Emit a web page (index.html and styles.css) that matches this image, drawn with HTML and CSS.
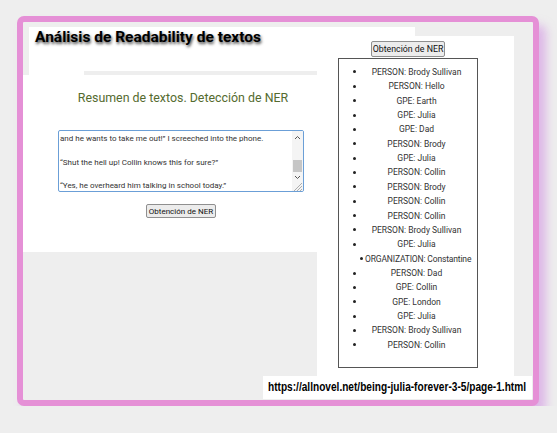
FILE: index.html
```html
<!DOCTYPE html>
<html lang="es">
<head>
<meta charset="utf-8">
<title>Análisis de Readability de textos</title>
<link rel="stylesheet" href="styles.css">
</head>
<body>
<div class="frame">
  <div class="canvas">
    <div class="title-band"><h1 class="title">Análisis de Readability de textos</h1></div>
    <div class="title-rule"></div>
    <section class="left-panel">
      <h2 class="subtitle">Resumen de textos. Detección de NER</h2>
      <div class="textarea">
        <div class="ta-text">
          <p>and he wants to take me out!” I screeched into the phone.</p>
          <p>“Shut the hell up! Collin knows this for sure?”</p>
          <p>“Yes, he overheard him talking in school today.”</p>
        </div>
        <div class="ta-scroll">
          <svg width="11" height="60" viewBox="0 0 11 60">
            <polyline points="3,8 5.5,5.5 8,8" fill="none" stroke="#555" stroke-width="1"/>
            <rect x="1" y="29" width="9" height="12" fill="#c6c6c6"/>
            <polyline points="3,45 5.5,47.5 8,45" fill="none" stroke="#555" stroke-width="1"/>
            <path d="M10 52 L2 60 M10 55 L5 60 M10 58 L8 60" stroke="#9a9a9a" stroke-width="0.8"/>
          </svg>
        </div>
      </div>
      <button class="btn btn-small" type="button">Obtención de NER</button>
    </section>
    <section class="right-panel">
      <div class="ner">
        <button class="btn btn-large" type="button">Obtención de NER</button>
        <div class="ner-box">
          <ul class="ner-list">
            <li><span class="dot"></span><span class="txt">PERSON: Brody Sullivan</span></li>
            <li><span class="dot"></span><span class="txt">PERSON: Hello</span></li>
            <li><span class="dot"></span><span class="txt">GPE: Earth</span></li>
            <li><span class="dot"></span><span class="txt">GPE: Julia</span></li>
            <li><span class="dot"></span><span class="txt">GPE: Dad</span></li>
            <li><span class="dot"></span><span class="txt">PERSON: Brody</span></li>
            <li><span class="dot"></span><span class="txt">GPE: Julia</span></li>
            <li><span class="dot"></span><span class="txt">PERSON: Collin</span></li>
            <li><span class="dot"></span><span class="txt">PERSON: Brody</span></li>
            <li><span class="dot"></span><span class="txt">PERSON: Collin</span></li>
            <li><span class="dot"></span><span class="txt">PERSON: Collin</span></li>
            <li><span class="dot"></span><span class="txt">PERSON: Brody Sullivan</span></li>
            <li><span class="dot"></span><span class="txt">GPE: Julia</span></li>
            <li class="wide"><span class="dot"></span><span class="txt">ORGANIZATION: Constantine</span></li>
            <li><span class="dot"></span><span class="txt">PERSON: Dad</span></li>
            <li><span class="dot"></span><span class="txt">GPE: Collin</span></li>
            <li><span class="dot"></span><span class="txt">GPE: London</span></li>
            <li><span class="dot"></span><span class="txt">GPE: Julia</span></li>
            <li><span class="dot"></span><span class="txt">PERSON: Brody Sullivan</span></li>
            <li><span class="dot"></span><span class="txt">PERSON: Collin</span></li>
          </ul>
        </div>
      </div>
    </section>
    <div class="url-band"><span class="url">https://allnovel.net/being-julia-forever-3-5/page-1.html</span></div>
  </div>
</div>
</body>
</html>
```

FILE: styles.css
```css
html, body {
  margin: 0;
  padding: 0;
  background: #eeeeee;
  font-family: Roboto, "Liberation Sans", Arial, sans-serif;
}

.frame {
  margin: 16px 0 0 17px;
  width: 510px;
  height: 378px;
  border: 6px solid #e590d6;
  border-radius: 7px;
  background: #eeeeee;
  box-shadow: 7px 9px 10px rgba(205, 130, 225, 0.5);
}

.canvas {
  display: grid;
  grid-template-columns: 6px 55px 179px 54px 98px 99px 18px 1px;
  grid-template-rows: 5px 9px 35px 4px 177px 124px 23px 1px;
}

.title-band {
  grid-column: 2 / 6;
  grid-row: 2 / 5;
  background: #fff;
  padding: 1px 0 0 6px;
}

.title {
  margin: 0;
  font: 700 15.5px/18px Roboto, sans-serif;
  color: #000;
  text-shadow: 1px 2px 3px rgba(0, 0, 0, 0.75);
  white-space: nowrap;
}

.title-rule {
  grid-column: 3 / 5;
  grid-row: 4 / 5;
  background: #eeeeee;
}

.left-panel {
  grid-column: 1 / 5;
  grid-row: 5 / 6;
  background: #fff;
  padding: 15px 13px 0 35px;
  display: flex;
  flex-direction: column;
  align-items: center;
}

.subtitle {
  margin: 0;
  width: 100%;
  box-sizing: border-box;
  padding-left: 4px;
  font: 400 12.4px/16px Roboto, sans-serif;
  color: #556b2f;
  text-align: center;
  white-space: nowrap;
}

.textarea {
  margin-top: 24px;
  width: 246px;
  height: 62px;
  box-sizing: border-box;
  border: 1px solid #6b9fd7;
  border-radius: 2px;
  display: flex;
  overflow: hidden;
  background: #fff;
}

.ta-text {
  flex: 1;
  overflow: hidden;
  padding: 2.15px 0 0 1px;
  font: 400 8px/11.75px Roboto, sans-serif;
  color: #333;
}

.ta-text p {
  margin: 0 0 11.75px;
  white-space: nowrap;
}

.ta-scroll {
  width: 11px;
  background: #f4f4f4;
  display: flex;
}

.btn {
  padding: 0;
  border: 1px solid #8f8f8f;
  border-radius: 2px;
  background: #ececec;
  color: #111;
  font-family: Roboto, sans-serif;
  white-space: nowrap;
}

.btn-small {
  margin-top: 12px;
  width: 70px;
  height: 14px;
  font-size: 8px;
}

.right-panel {
  grid-column: 5 / 7;
  grid-row: 3 / 7;
  background: #fff;
  padding: 5px 0 0 21px;
}

.ner {
  width: 140px;
  display: flex;
  flex-direction: column;
  align-items: center;
}

.btn-large {
  width: 74px;
  height: 16px;
  font-size: 8.8px;
}

.ner-box {
  margin-top: 1px;
  width: 140px;
  height: 310px;
  box-sizing: border-box;
  border: 1px solid #555;
}

.ner-list {
  list-style: none;
  margin: 5.8px 0 0;
  padding: 0 6px 0 13.5px;
  font: 400 8.5px Roboto, sans-serif;
  color: #333;
}

.ner-list li {
  display: flex;
  align-items: center;
  height: 14.37px;
}

.dot {
  flex: none;
  width: 3px;
  height: 3px;
  border-radius: 50%;
  background: #222;
  margin-right: 6.5px;
}

.txt {
  flex: 1;
  text-align: center;
  white-space: nowrap;
}

.ner-list li.wide .dot {
  margin-left: 7.5px;
  margin-right: 2px;
}

.ner-list li.wide .txt {
  flex: none;
  text-align: left;
  letter-spacing: -0.15px;
}

.url-band {
  grid-column: 4 / 8;
  grid-row: 7 / 8;
  background: #fff;
  padding-left: 5px;
  font: 700 12px/23px "Liberation Sans", Arial, sans-serif;
  color: #000;
  white-space: nowrap;
  overflow: hidden;
}

.url {
  display: inline-block;
  transform: scaleX(0.843);
  transform-origin: 0 50%;
}
```
